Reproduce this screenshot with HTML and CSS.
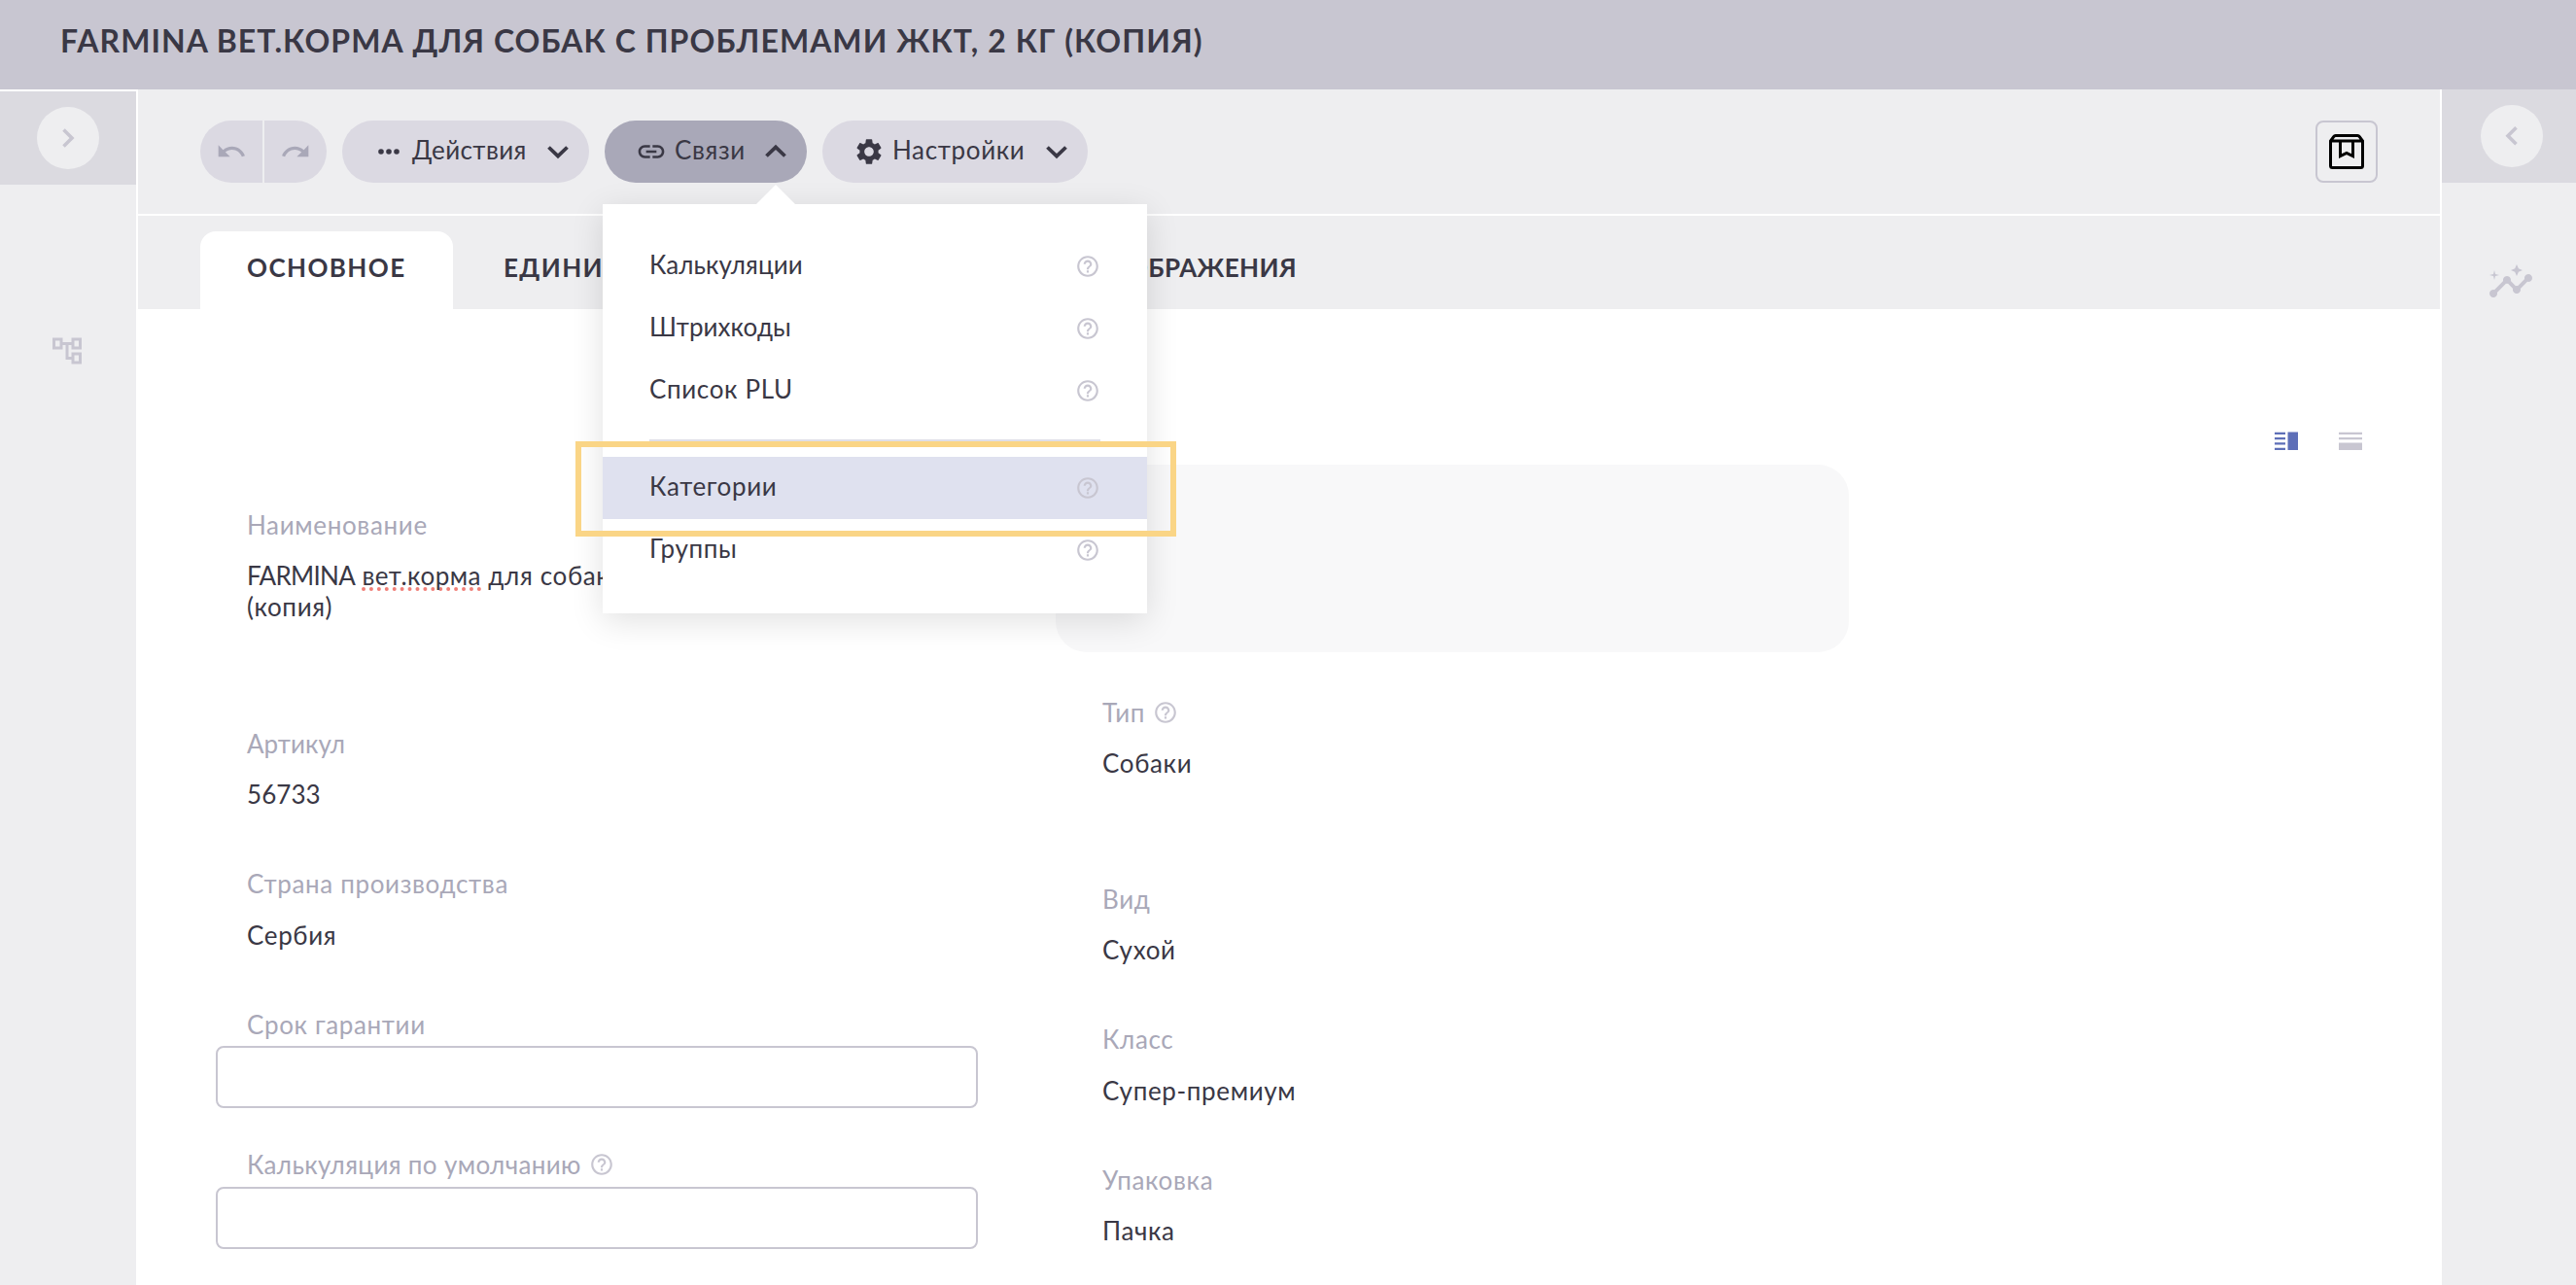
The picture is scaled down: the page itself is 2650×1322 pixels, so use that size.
FILE: index.html
```html
<!DOCTYPE html>
<html lang="ru">
<head>
  <meta charset="UTF-8">
  <title>FARMINA вет.корма для собак</title>
  <link rel="stylesheet" href="styles.css">
</head>
<body>
  <svg class="sprite">
    <symbol id="help" viewBox="0 0 24 24"><path d="M11 18h2v-2h-2v2zm1-16C6.48 2 2 6.48 2 12s4.48 10 10 10 10-4.48 10-10S17.52 2 12 2zm0 18c-4.41 0-8-3.59-8-8s3.59-8 8-8 8 3.59 8 8-3.59 8-8 8zm0-14c-2.21 0-4 1.79-4 4h2c0-1.1.9-2 2-2s2 .9 2 2c0 2-3 1.75-3 5h2c0-2.25 3-2.5 3-5 0-2.21-1.79-4-4-4z"/></symbol>
    <symbol id="chevron" viewBox="0 0 32 32"><path d="M6.5 11.5l9.5 9.2 9.5-9.2" fill="none" stroke="currentColor" stroke-width="3.8"/></symbol>
  </svg>

  <header class="header"><h1>FARMINA вет.корма для собак с проблемами ЖКТ, 2 кг (копия)</h1></header>

  <div class="layout">
    <aside class="sidebar sidebar-left">
      <div class="sidebar-head">
        <button class="round-btn"><svg width="32" height="32" viewBox="0 0 32 32"><path d="M11.5 7.5l8.5 8.5-8.5 8.5" fill="none" stroke="currentColor" stroke-width="3.6"/></svg></button>
      </div>
      <svg class="side-icon" width="36" height="36" viewBox="0 0 24 24"><path d="M22 11V3h-7v3H9V3H2v8h7V8h2v10h4v3h7v-8h-7v3h-2V8h2v3h7zM7 9H4V5h3v4zm10 6h3v4h-3v-4zm0-10h3v4h-3V5z"/></svg>
    </aside>

    <main class="main">
      <div class="toolbar">
        <div class="history">
          <button><svg width="32" height="32" viewBox="0 0 24 24"><path d="M12.5 8c-2.65 0-5.05.99-6.9 2.6L2 7v9h9l-3.62-3.62c1.39-1.16 3.16-1.88 5.12-1.88 3.54 0 6.55 2.31 7.6 5.5l2.37-.78C21.08 11.03 17.15 8 12.5 8z"/></svg></button>
          <button><svg width="32" height="32" viewBox="0 0 24 24"><path d="M18.4 10.6C16.55 8.99 14.15 8 11.5 8c-4.65 0-8.58 3.03-9.96 7.22L3.9 16c1.05-3.19 4.05-5.5 7.6-5.5 1.95 0 3.73.72 5.12 1.88L13 16h9V7l-3.6 3.6z"/></svg></button>
        </div>
        <button class="pill pill-actions">
          <svg class="icon" viewBox="0 0 24 24"><circle cx="6" cy="12" r="2.1"/><circle cx="12" cy="12" r="2.1"/><circle cx="18" cy="12" r="2.1"/></svg>
          <span>Действия</span>
          <svg class="icon arrow"><use href="#chevron"/></svg>
        </button>
        <div class="dropdown">
          <button class="pill pill-links active">
            <svg class="icon" viewBox="0 0 24 24"><path d="M3.9 12c0-1.71 1.39-3.1 3.1-3.1h4V7H7c-2.76 0-5 2.24-5 5s2.24 5 5 5h4v-1.9H7c-1.71 0-3.1-1.39-3.1-3.1zM8 13h8v-2H8v2zm9-6h-4v1.9h4c1.71 0 3.1 1.39 3.1 3.1s-1.39 3.1-3.1 3.1h-4V17h4c2.76 0 5-2.24 5-5s-2.24-5-5-5z"/></svg>
            <span>Связи</span>
            <svg class="icon arrow up"><use href="#chevron"/></svg>
          </button>
          <div class="menu">
            <div class="menu-item"><span class="tight">Калькуляции</span><svg class="help"><use href="#help"/></svg></div>
            <div class="menu-item"><span class="tight">Штрихкоды</span><svg class="help"><use href="#help"/></svg></div>
            <div class="menu-item"><span>Список PLU</span><svg class="help"><use href="#help"/></svg></div>
            <div class="menu-divider"></div>
            <div class="menu-item selected"><span>Категории</span><svg class="help"><use href="#help"/></svg></div>
            <div class="menu-item"><span>Группы</span><svg class="help"><use href="#help"/></svg></div>
            <div class="marker"></div>
          </div>
        </div>
        <button class="pill pill-settings">
          <svg class="icon" viewBox="0 0 24 24"><path d="M19.14 12.94c.04-.3.06-.61.06-.94 0-.32-.02-.64-.07-.94l2.03-1.58c.18-.14.23-.41.12-.61l-1.92-3.32c-.12-.22-.37-.29-.59-.22l-2.39.96c-.5-.38-1.03-.7-1.62-.94L14.4 2.81c-.04-.24-.24-.41-.48-.41h-3.84c-.24 0-.43.17-.47.41l-.36 2.54c-.59.24-1.13.57-1.62.94l-2.39-.96c-.22-.08-.47 0-.59.22L2.74 8.87c-.12.21-.08.47.12.61l2.03 1.58c-.05.3-.09.63-.09.94s.02.64.07.94l-2.03 1.58c-.18.14-.23.41-.12.61l1.92 3.32c.12.22.37.29.59.22l2.39-.96c.5.38 1.03.7 1.62.94l.36 2.54c.05.24.24.41.48.41h3.84c.24 0 .44-.17.47-.41l.36-2.54c.59-.24 1.13-.56 1.62-.94l2.39.96c.22.08.47 0 .59-.22l1.92-3.32c.12-.22.07-.47-.12-.61l-2.01-1.58zM12 15.6c-1.98 0-3.6-1.62-3.6-3.6s1.62-3.6 3.6-3.6 3.6 1.62 3.6 3.6-1.62 3.6-3.6 3.6z"/></svg>
          <span>Настройки</span>
          <svg class="icon arrow"><use href="#chevron"/></svg>
        </button>
        <button class="box-btn">
          <svg width="36" height="36" viewBox="0 0 36 36"><path d="M1.5 7v25.5a2 2 0 0 0 2 2h29a2 2 0 0 0 2-2V7l-3.2-4.4a2.6 2.6 0 0 0-2-1.1H6.7a2.6 2.6 0 0 0-2 1.1zM1.5 7h33M11.5 7v15.5l6.5-3.2 6.5 3.2V7" fill="none" stroke="#000" stroke-width="3"/></svg>
        </button>
      </div>

      <nav class="tabs">
        <div class="tab current">Основное</div>
        <div class="tab">Единицы</div>
        <div class="tab last">Изображения</div>
      </nav>

      <section class="content">
        <div class="views">
          <svg class="view-on" width="24" height="20" viewBox="0 0 24 20"><path d="M0 .8h11V3H0zM0 6h11v2.2H0zM0 11.3h11v2.2H0zM0 16.7h11V19H0zM13.5.5H24V19H13.5z"/></svg>
          <svg class="view-off" width="24" height="20" viewBox="0 0 24 20"><path d="M0 .8h24V3H0zM0 6h24v2.2H0zM0 11.5h24V19H0z"/></svg>
        </div>
        <div class="form">
          <div class="column">
            <div class="field field-name">
              <div class="label">Наименование</div>
              <div class="value"><span class="brand">FARMINA</span> <span class="typo">вет.корма</span> для собак с проблемами ЖКТ, 2 кг<br>(копия)</div>
            </div>
            <div class="field"><div class="label tight">Артикул</div><div class="value tight">56733</div></div>
            <div class="field"><div class="label">Страна производства</div><div class="value">Сербия</div></div>
            <div class="field"><div class="label">Срок гарантии</div><input type="text"></div>
            <div class="field"><div class="label label-default">Калькуляция по умолчанию<svg class="help"><use href="#help"/></svg></div><input type="text"></div>
          </div>
          <div class="column">
            <div class="card"></div>
            <div class="field field-type"><div class="label">Тип<svg class="help"><use href="#help"/></svg></div><div class="value">Собаки</div></div>
            <div class="field"><div class="label">Вид</div><div class="value">Сухой</div></div>
            <div class="field"><div class="label">Класс</div><div class="value">Супер-премиум</div></div>
            <div class="field"><div class="label">Упаковка</div><div class="value">Пачка</div></div>
          </div>
        </div>
      </section>
    </main>

    <aside class="sidebar sidebar-right">
      <div class="sidebar-head">
        <button class="round-btn"><svg width="32" height="32" viewBox="0 0 32 32"><path d="M20.5 7.2L12 15.7l8.5 8.5" fill="none" stroke="currentColor" stroke-width="3.6"/></svg></button>
      </div>
      <svg class="side-icon" width="48" height="48" viewBox="0 0 24 24"><path d="M21 8c-1.45 0-2.26 1.44-1.93 2.51l-3.55 3.56c-.3-.09-.74-.09-1.04 0l-2.55-2.55C12.27 10.45 11.46 9 10 9c-1.45 0-2.27 1.44-1.93 2.52l-4.56 4.55C2.44 15.74 1 16.55 1 18c0 1.1.9 2 2 2 1.45 0 2.26-1.44 1.93-2.51l4.55-4.56c.3.09.74.09 1.04 0l2.55 2.55C12.73 16.55 13.54 18 15 18c1.45 0 2.27-1.44 1.93-2.52l3.56-3.55C21.56 12.26 23 11.45 23 10c0-1.1-.9-2-2-2zM15 9l.94-2.07L18 6l-2.06-.93L15 3l-.92 2.07L12 6l2.08.93zM3.5 11L4 9l2-.5L4 8l-.5-2L3 8l-2 .5L3 9z"/></svg>
    </aside>
  </div>
</body>
</html>
```

FILE: styles.css
```css
* { box-sizing: border-box; }
body {
  margin: 0;
  height: 1322px;
  overflow: hidden;
  background: #fff;
  color: #3a3845;
  font-family: Lato, "Open Sans", sans-serif;
  font-size: 26px;
  line-height: 32px;
  letter-spacing: 0.65px;
}
button { border: 0; padding: 0; background: none; color: inherit; font: inherit; letter-spacing: inherit; }
svg { display: block; flex: none; fill: currentColor; }
.sprite { position: absolute; width: 0; height: 0; }
.tight { letter-spacing: 0.05px; }

.header { display: flex; align-items: center; height: 92px; padding: 0 62px 9px; background: #c8c6d1; }
.header h1 { margin: 0; font-size: 32px; font-weight: 700; letter-spacing: 1.05px; text-transform: uppercase; white-space: nowrap; }

.layout { display: grid; grid-template-columns: 142px 1fr 140px; height: 1230px; }

/* side panels */
.sidebar { display: flex; flex-direction: column; background: #eeeef0; color: #c8c6d1; }
.sidebar-left { border-right: 2px solid #fff; border-top: 2px solid #fff; }
.sidebar-right { border-left: 2px solid #fff; }
.sidebar-head { display: flex; align-items: center; justify-content: center; height: 96px; background: #dbdae0; }
.round-btn { display: flex; align-items: center; justify-content: center; width: 64px; height: 64px; border-radius: 50%; background: #eeeef0; color: #c8c6d1; }
.sidebar-right .sidebar-head { padding-left: 6px; }
.sidebar-left .side-icon { margin: 153px 0 0 51px; }
.sidebar-right .side-icon { margin: 78px 0 0 47px; }

/* toolbar */
.toolbar { display: flex; align-items: center; gap: 16px; height: 130px; padding: 0 64px; border-bottom: 2px solid #fff; background: #eeeef0; }
.history { display: flex; gap: 2px; color: #a9a8b8; }
.history button { display: flex; align-items: center; justify-content: center; width: 64px; height: 64px; background: #dbd9e2; }
.history button:first-child { border-radius: 32px 0 0 32px; }
.history button:last-child { border-radius: 0 32px 32px 0; }
.pill { display: flex; align-items: center; gap: 8px; height: 64px; padding: 0 16px 0 32px; border-radius: 32px; background: #dbd9e2; }
.pill span { padding-bottom: 4px; }
.pill .icon { width: 32px; height: 32px; }
.pill .arrow { margin-left: auto; }
.pill .up { transform: scaleY(-1); }
.pill.active { background: #a9a8b8; }
.pill-actions { width: 254px; letter-spacing: 0.4px; }
.pill-links { width: 208px; }
.pill-settings { width: 273px; }
.box-btn { display: flex; align-items: center; justify-content: center; width: 64px; height: 64px; margin-left: auto; border: 2px solid #c8c6d1; border-radius: 8px; }

/* dropdown menu */
.dropdown { position: relative; z-index: 5; }
.menu { position: absolute; top: 86px; left: -2px; width: 560px; height: 421px; padding-top: 32px; background: #fff; box-shadow: 0 8px 32px rgba(0, 0, 0, 0.12); }
.menu::before { content: ""; position: absolute; top: -20px; left: 158px; border: 20px solid transparent; border-top: 0; border-bottom-color: #fff; }
.menu-item { display: flex; align-items: center; justify-content: space-between; height: 64px; padding: 0 48px; }
.menu-item span { padding-bottom: 4px; }
.menu-item.selected { background: #dfe1ef; }
.menu-divider { height: 2px; margin: 18px 48px 16px; background: #dfdfe8; }
.marker { position: absolute; top: 244px; left: -28px; width: 618px; height: 98px; border: 6px solid #fad586; }
.help { width: 26px; height: 26px; color: #c8c6d1; }

/* tabs */
.tabs { display: flex; gap: 4px; height: 96px; padding: 16px 1129px 0 64px; background: #eeeef0; }
.tab { padding: 21px 48px 0; font-weight: 700; letter-spacing: 1.4px; text-transform: uppercase; white-space: nowrap; }
.tab.current { width: 260px; border-radius: 16px 16px 0 0; background: #fff; }
.tab.last { margin-left: auto; padding-right: 47px; letter-spacing: 0.4px; }

/* form */
.content { height: 1004px; padding: 126px 64px 0; }
.views { display: flex; justify-content: flex-end; gap: 42px; height: 34px; padding-right: 16px; }
.view-on { color: #5e6fb8; }
.view-off { color: #c8c6d1; }
.form { display: grid; grid-template-columns: 816px 816px; gap: 64px; }
.field { height: 144.5px; padding: 0 48px; }
.field-name { height: 270px; padding-top: 45px; }
.field-type { height: 192px; }
.label { display: flex; align-items: center; gap: 8px; height: 32px; padding-top: 1px; color: #a9a8b8; }
.label-default { letter-spacing: 0.35px; }
.value { margin-top: 21px; white-space: nowrap; }
.brand { letter-spacing: -0.7px; }
.typo { letter-spacing: 0.5px; text-decoration: underline dotted 4px #f07f78; text-underline-offset: 2px; text-decoration-skip-ink: none; }
.field input { display: block; width: 784px; height: 64px; margin: 7px 0 0 -32px; border: 2px solid #c8c6d1; border-radius: 8px; background: #fff; }
.card { height: 193px; margin-bottom: 45px; border-radius: 32px; background: #f8f8f9; }
```
